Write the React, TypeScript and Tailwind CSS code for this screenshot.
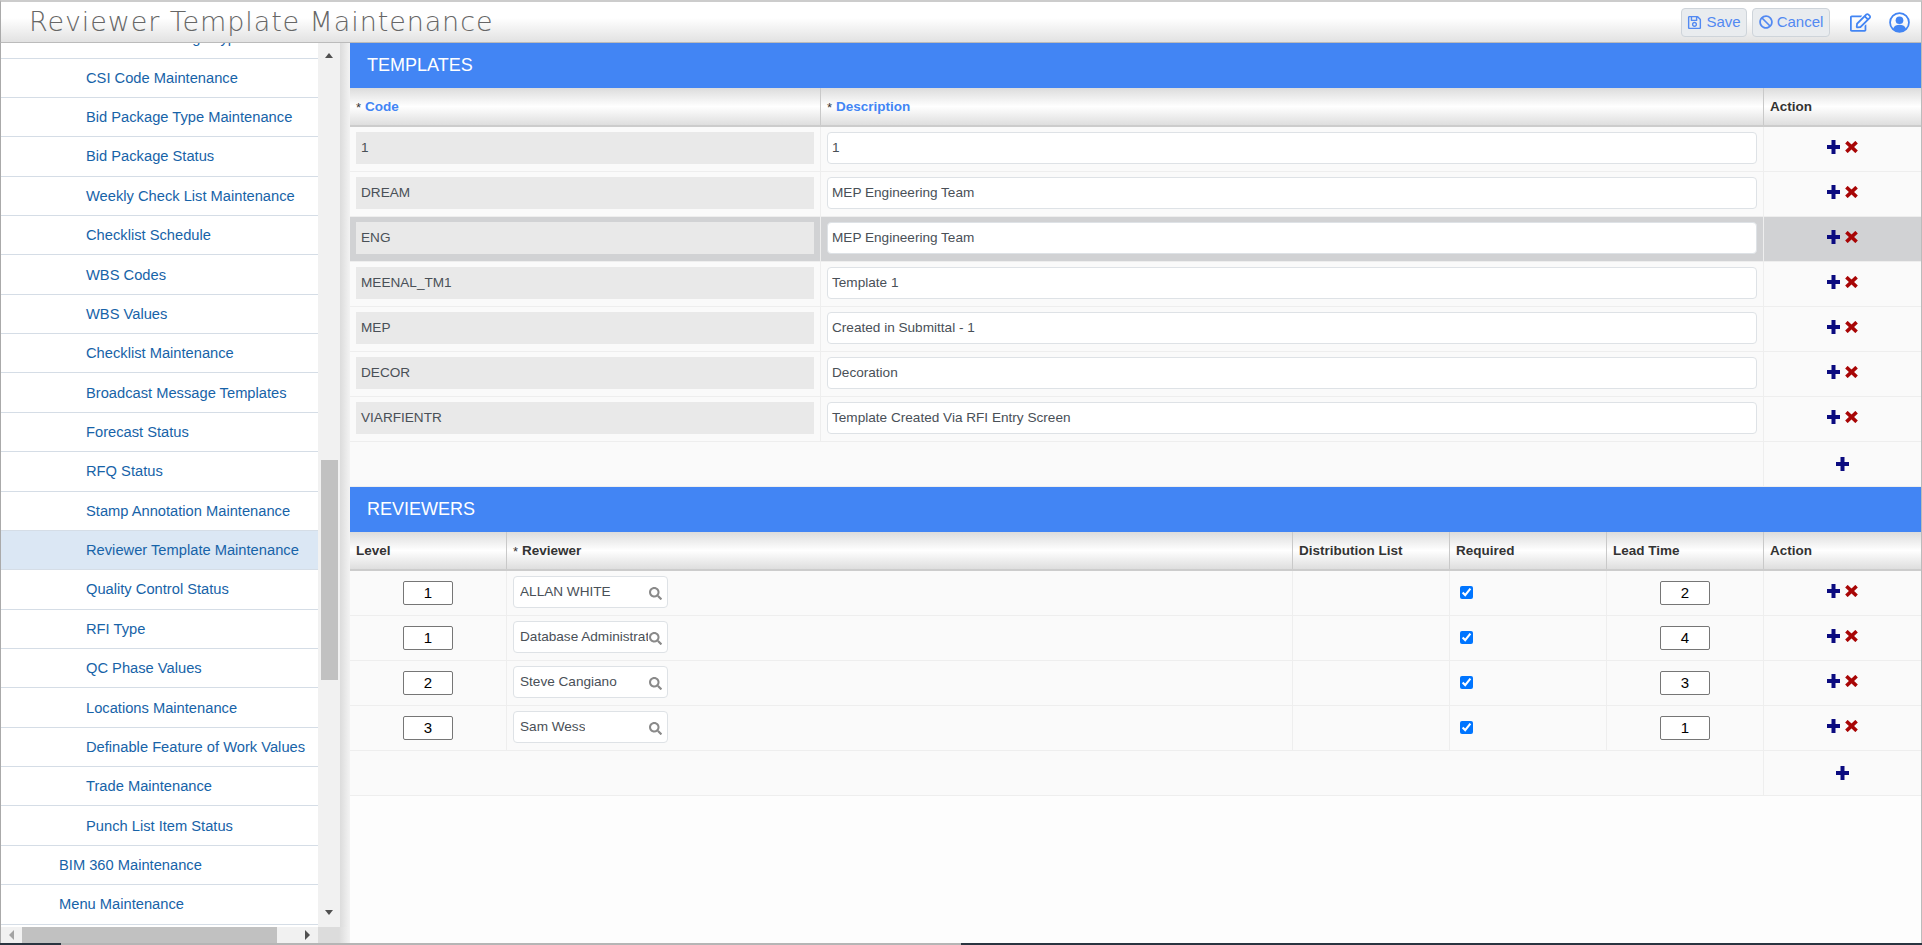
import { FaBan, FaRegEdit, FaRegSave, FaSearch } from 'react-icons/fa';

const menuItems = [
  'CSI Code Maintenance',
  'Bid Package Type Maintenance',
  'Bid Package Status',
  'Weekly Check List Maintenance',
  'Checklist Schedule',
  'WBS Codes',
  'WBS Values',
  'Checklist Maintenance',
  'Broadcast Message Templates',
  'Forecast Status',
  'RFQ Status',
  'Stamp Annotation Maintenance',
  'Reviewer Template Maintenance',
  'Quality Control Status',
  'RFI Type',
  'QC Phase Values',
  'Locations Maintenance',
  'Definable Feature of Work Values',
  'Trade Maintenance',
  'Punch List Item Status',
];

const templates = [
  { code: '1', description: '1' },
  { code: 'DREAM', description: 'MEP Engineering Team' },
  { code: 'ENG', description: 'MEP Engineering Team', selected: true },
  { code: 'MEENAL_TM1', description: 'Template 1' },
  { code: 'MEP', description: 'Created in Submittal - 1' },
  { code: 'DECOR', description: 'Decoration' },
  { code: 'VIARFIENTR', description: 'Template Created Via RFI Entry Screen' },
];

const reviewers = [
  { level: 1, name: 'ALLAN WHITE', lead: 2 },
  { level: 1, name: 'Database Administrator', lead: 4 },
  { level: 2, name: 'Steve Cangiano', lead: 3 },
  { level: 3, name: 'Sam Wess', lead: 1 },
];

const headerBg = 'bg-[linear-gradient(to_bottom,#dcdcdc_0%,#ffffff_50%,#dedede_100%)]';

const PlusIcon = () => (
  <svg width="13" height="14" viewBox="0 0 13 14" className="shrink-0">
    <polygon points="4.5,0 8.5,0 8.5,5 13,5 13,9 8.5,9 8.5,14 4.5,14 4.5,9 0,9 0,5 4.5,5" fill="#0b0b80" />
  </svg>
);

const RemoveIcon = () => (
  <svg width="13" height="12" viewBox="0 0 13 12" className="shrink-0">
    <path d="M1.4 1.2 L11.6 10.8 M11.6 1.2 L1.4 10.8" stroke="#a80606" strokeWidth="3.6" fill="none" />
  </svg>
);

const UserIcon = () => (
  <svg width="21" height="21" viewBox="0 0 24 24" className="ml-[18px] mr-[11px] shrink-0">
    <circle cx="12" cy="12" r="10.8" stroke="#4285f4" strokeWidth="2" fill="none" />
    <circle cx="12" cy="9.4" r="4.4" fill="#4285f4" />
    <path d="M4.6 19 C6 15.6 9 14.6 12 14.6 S18 15.6 19.4 19 C17.5 21.4 15 22.4 12 22.4 S6.5 21.4 4.6 19Z" fill="#4285f4" />
  </svg>
);

const RowActions = () => (
  <div className="flex justify-center items-start gap-[5px] pt-[13px]">
    <PlusIcon />
    <div className="pt-[1px]">
      <RemoveIcon />
    </div>
  </div>
);

const SectionBar = ({ title }: { title: string }) => (
  <div className="h-[45px] shrink-0 bg-[#4285f4] text-white text-[18px] flex items-center pl-[17px]">{title}</div>
);

const HeadCell = ({ label, required, blue }: { label: string; required?: boolean; blue?: boolean }) => (
  <div className="border-r border-[#c9c9c9] last:border-r-0 pl-[6px] pt-[2px] flex items-center font-bold text-[13.5px] text-[#333]">
    {required && <span className="font-normal text-[13px] mr-[4px]">*</span>}
    <span className={blue ? 'text-[#4285f4]' : ''}>{label}</span>
  </div>
);

const NumberBox = ({ value }: { value: number }) => (
  <div className="w-[50px] h-[24px] bg-white border border-[#767676] rounded-[2px] flex items-center justify-center text-[15px] text-black">
    {value}
  </div>
);

const TemplatesTable = () => (
  <>
    <SectionBar title="TEMPLATES" />
    <div className={`grid grid-cols-[471px_943px_1fr] h-[39px] border-b-2 border-[#cccccc] ${headerBg}`}>
      <HeadCell label="Code" required blue />
      <HeadCell label="Description" required blue />
      <HeadCell label="Action" />
    </div>
    {templates.map((t) => (
      <div
        key={t.code}
        className={`grid grid-cols-[471px_943px_1fr] h-[45px] border-b border-[#eeeeee] text-[13.6px] text-[#495057] ${
          t.selected ? 'bg-[#d1d2d4]' : ''
        }`}
      >
        <div className="border-r border-[#eeeeee] pl-[6px] pr-[6px] pt-[5px]">
          <div className="h-[32px] bg-[#e9e9e9] flex items-center pl-[5px]">{t.code}</div>
        </div>
        <div className="border-r border-[#eeeeee] pl-[6px] pr-[6px] pt-[5px]">
          <div className="h-[32px] bg-white border border-[#dee2e6] rounded-[4px] flex items-center pl-[4px]">
            {t.description}
          </div>
        </div>
        <RowActions />
      </div>
    ))}
    <div className="grid grid-cols-[1414px_1fr] h-[45px] border-b border-[#eeeeee]">
      <div className="border-r border-[#eeeeee]" />
      <div className="flex items-center justify-center">
        <PlusIcon />
      </div>
    </div>
  </>
);

const ReviewersTable = () => (
  <>
    <SectionBar title="REVIEWERS" />
    <div className={`grid grid-cols-[157px_786px_157px_157px_157px_1fr] h-[39px] border-b-2 border-[#cccccc] ${headerBg}`}>
      <HeadCell label="Level" />
      <HeadCell label="Reviewer" required />
      <HeadCell label="Distribution List" />
      <HeadCell label="Required" />
      <HeadCell label="Lead Time" />
      <HeadCell label="Action" />
    </div>
    {reviewers.map((r) => (
      <div
        key={r.name}
        className="grid grid-cols-[157px_786px_157px_157px_157px_1fr] h-[45px] border-b border-[#eeeeee] text-[13.6px] text-[#495057]"
      >
        <div className="border-r border-[#eeeeee] flex justify-center pt-[10px]">
          <NumberBox value={r.level} />
        </div>
        <div className="border-r border-[#eeeeee] pl-[6px] pt-[5px]">
          <div className="relative w-[155px] h-[32px] bg-white border border-[#dee2e6] rounded-[4px] flex items-center pl-[6px] pr-[19px]">
            <span className="overflow-hidden whitespace-nowrap">{r.name}</span>
            <FaSearch className="absolute right-[5px] top-[10px] text-[#8a8a8a]" size={13} />
          </div>
        </div>
        <div className="border-r border-[#eeeeee]" />
        <div className="border-r border-[#eeeeee] pl-[10px] pt-[15px]">
          <input type="checkbox" defaultChecked className="block w-[13px] h-[13px] accent-[#0075ff]" />
        </div>
        <div className="border-r border-[#eeeeee] flex justify-center pt-[10px]">
          <NumberBox value={r.lead} />
        </div>
        <RowActions />
      </div>
    ))}
    <div className="grid grid-cols-[1414px_1fr] h-[45px] border-b border-[#eeeeee]">
      <div className="border-r border-[#eeeeee]" />
      <div className="flex items-center justify-center">
        <PlusIcon />
      </div>
    </div>
  </>
);

const Sidebar = () => (
  <div className="w-[350px] shrink-0 flex flex-col h-full">
    <div className="flex-1 flex min-h-0">
      <div className="w-[318px] shrink-0 border-l border-[#aaaaaa] bg-white overflow-hidden text-[14.7px] text-[#1763a8]">
        <div className="h-[15.6px] border-b border-[#d5dde6] overflow-hidden">
          <div className="h-[38.34px] -mt-[23.7px] pl-[85px] flex items-center whitespace-nowrap">Submittal Package Type</div>
        </div>
        {menuItems.map((item) => (
          <div
            key={item}
            className={`h-[39.36px] border-b border-[#d5dde6] pl-[85px] flex items-center whitespace-nowrap ${
              item === 'Reviewer Template Maintenance' ? 'bg-[#dbe7f4]' : ''
            }`}
          >
            {item}
          </div>
        ))}
        {['BIM 360 Maintenance', 'Menu Maintenance'].map((item) => (
          <div key={item} className="h-[39.36px] border-b border-[#d5dde6] pl-[58px] flex items-center whitespace-nowrap">
            {item}
          </div>
        ))}
      </div>
      {/* vertical scrollbar */}
      <div className="w-[22px] shrink-0 bg-[#f1f1f1] flex flex-col items-center">
        <div className="h-[17px] mt-[4px] flex items-center justify-center">
          <div className="w-0 h-0 border-x-[4px] border-x-transparent border-b-[5px] border-b-[#505050]" />
        </div>
        <div className="w-[17px] h-[220px] mt-[396px] bg-[#c1c1c1]" />
        <div className="flex-1" />
        <div className="h-[17px] mb-[6px] flex items-center justify-center">
          <div className="w-0 h-0 border-x-[4px] border-x-transparent border-t-[5px] border-t-[#505050]" />
        </div>
      </div>
      <div className="flex-1 bg-[linear-gradient(to_right,#dcdcdc,#f3f3f3)]" />
    </div>
    {/* horizontal scrollbar */}
    <div className="h-[16px] shrink-0 flex">
      <div className="w-[318px] border-l border-[#aaaaaa] bg-[#f1f1f1] flex items-center">
        <div className="w-[21px] flex justify-center">
          <div className="w-0 h-0 border-y-[5px] border-y-transparent border-r-[5px] border-r-[#a3a3a3]" />
        </div>
        <div className="w-[255px] h-full bg-[#c1c1c1]" />
        <div className="w-0 h-0 ml-auto mr-[8px] border-y-[5px] border-y-transparent border-l-[5px] border-l-[#505050]" />
      </div>
      <div className="w-[21px] bg-[#dcdcdc]" />
      <div className="flex-1 bg-[linear-gradient(to_right,#dcdcdc,#f3f3f3)]" />
    </div>
  </div>
);

export default function App() {
  return (
    <div className="w-[1922px] h-[945px] overflow-hidden flex flex-col bg-white font-['Liberation_Sans',sans-serif]">
      <header className="h-[43px] shrink-0 border-t-2 border-b border-t-[#cccccc] border-b-[#bbbbbb] border-l border-l-[#aaaaaa] border-r border-r-[#bbbbbb] bg-[linear-gradient(to_bottom,#ffffff_40%,#e2e2e2_100%)] flex items-center">
        <h1 className="pl-[28px] text-[#666666] text-[27px] font-extralight tracking-[0.9px] font-['DejaVu_Sans',sans-serif]">
          Reviewer Template Maintenance
        </h1>
        <div className="ml-auto flex items-center">
          <button className="w-[66px] h-[29px] bg-[#e9ecef] border border-[#ced4da] rounded-[4px] flex items-center justify-center gap-[4px] text-[15px] text-[#5289f2]">
            <FaRegSave size={15} />
            Save
          </button>
          <button className="w-[78px] h-[29px] ml-[5px] bg-[#e9ecef] border border-[#ced4da] rounded-[4px] flex items-center justify-center gap-[4px] text-[15px] text-[#5289f2]">
            <FaBan size={14} />
            Cancel
          </button>
          <FaRegEdit size={21} className="ml-[20px] text-[#4285f4]" />
          <UserIcon />
        </div>
      </header>
      <div className="flex-1 flex min-h-0">
        <Sidebar />
        <main className="flex-1 border-r border-[#bbbbbb] bg-[#fdfdfd]">
          <div className="bg-[#fafafa]">
            <TemplatesTable />
            <ReviewersTable />
          </div>
        </main>
      </div>
      <div className="h-[2px] shrink-0 flex">
        <div className="w-[61px] bg-[#2a3440]" />
        <div className="w-[900px] bg-[#b5b5b5]" />
        <div className="flex-1 bg-[#2a3440]" />
      </div>
    </div>
  );
}
